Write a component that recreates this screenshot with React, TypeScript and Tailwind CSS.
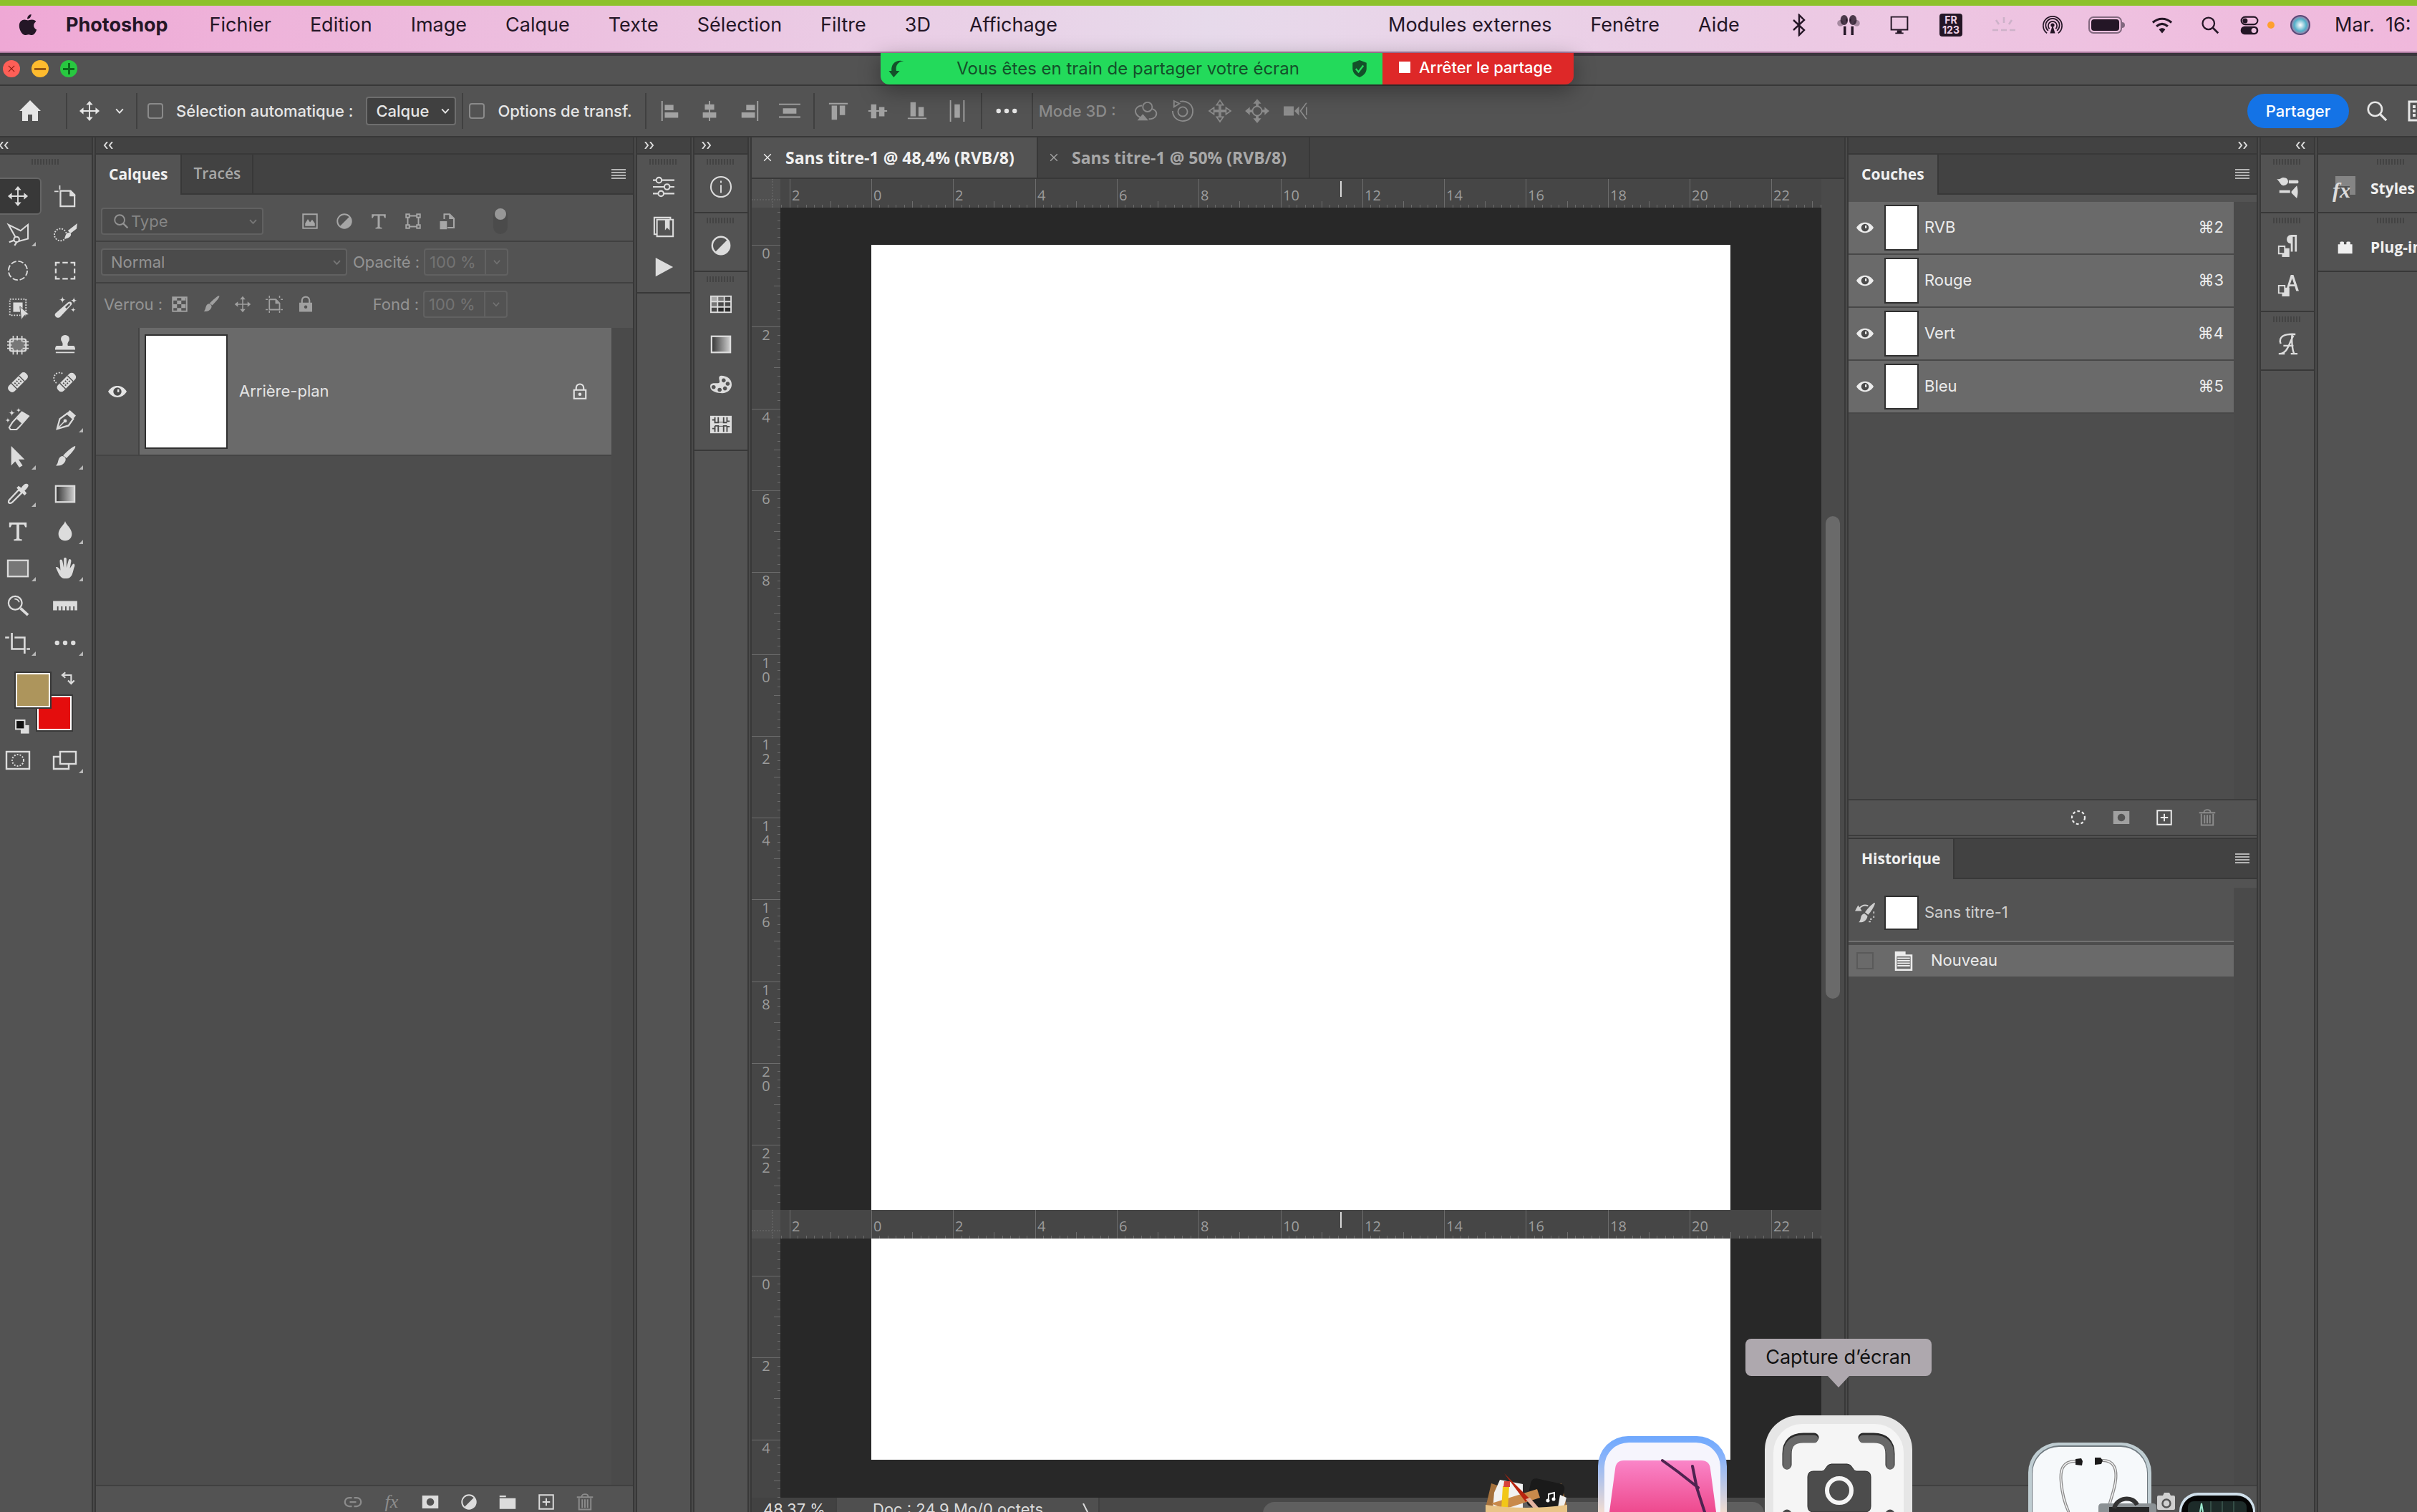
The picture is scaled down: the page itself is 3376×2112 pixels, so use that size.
import type { ReactNode } from 'react'

type IconProps = {
  name: string
  className?: string
}

const star = (x: number, y: number, r: number) =>
  `M${x} ${y - r}Q${x} ${y} ${x + r} ${y}Q${x} ${y} ${x} ${y + r}Q${x} ${y} ${x - r} ${y}Q${x} ${y} ${x} ${y - r}Z`

// All drawings share a 32 x 32 grid
const icons: Record<string, ReactNode> = {
  move: (
    <>
      <path d="M16 4v24M4 16h24" stroke="currentColor" strokeWidth="2" />
      <path d="M16 1l5 6H11zM16 31l5-6H11zM1 16l6-5v10zM31 16l-6-5v10z" fill="currentColor" />
    </>
  ),
  artboard: (
    <>
      <path d="M9 8h15l6 6v17H9zM24 8v7h6" fill="none" stroke="currentColor" strokeWidth="2.4" />
      <path d="M0 9h6M8 0v6" stroke="currentColor" strokeWidth="1.8" />
      <path d="M23 8h2l6 6v2h-8z" fill="currentColor" />
    </>
  ),
  lasso: (
    <>
      <path d="M2 3l18 9 11-9v21l-15 4L2 3z" fill="none" stroke="currentColor" strokeWidth="2.2" />
      <ellipse cx="14" cy="25" rx="4" ry="4" fill="#535353" stroke="currentColor" strokeWidth="2.2" />
      <path d="M3 29l8-3M11 34l4-6" stroke="currentColor" strokeWidth="2.4" />
    </>
  ),
  quickselect: (
    <>
      <circle cx="9" cy="18" r="9" fill="none" stroke="currentColor" strokeWidth="2" strokeDasharray="2 2" />
      <path d="M34 1l-1 8-9 7-4-4z" fill="currentColor" />
      <path d="M14 24c3 0 1-10 9-9 4 2 1 9-9 9z" fill="currentColor" />
    </>
  ),
  ellipse: <circle cx="16" cy="16" r="14" fill="none" stroke="currentColor" strokeWidth="2" strokeDasharray="8 3" />,
  marquee: (
    <path
      d="M2 9V4h6M12 4h8M24 4h6v5M30 13v7M30 24v4h-6M20 28h-8M8 28H2v-4M2 20v-7"
      fill="none"
      stroke="currentColor"
      strokeWidth="2.4"
    />
  ),
  objectselect: (
    <>
      <rect x="4" y="3" width="24" height="24" fill="none" stroke="currentColor" strokeWidth="2" strokeDasharray="2 2" />
      <path d="M9 8h14v14H9z" fill="currentColor" />
      <path d="M19 14l14 12-7 1-5 7z" fill="currentColor" stroke="#535353" strokeWidth="1" />
    </>
  ),
  wand: (
    <>
      <path d="M3 30c-3-2-3-5 0-7L20 8c4-3 8 1 5 4L9 29c-2 2-4 2-6 1z" fill="currentColor" />
      <path d="M16 15l5-5c2-1 3 0 2 2l-5 5z" fill="#535353" />
      <path d={star(12, 4, 5) + star(29, 5, 5) + star(28, 19, 4)} fill="currentColor" />
    </>
  ),
  frame: (
    <>
      <rect x="4" y="7" width="24" height="18" rx="3" fill="#777" stroke="currentColor" strokeWidth="2.2" />
      <path
        d="M9 2v9M15 2v7M22 2v9M9 22v8M15 23v7M22 22v8M0 11h9M0 16h7M0 21h9M23 11h9M25 16h7M23 21h9"
        stroke="currentColor"
        strokeWidth="1.8"
      />
    </>
  ),
  stamp: (
    <path
      d="M16 1c5 0 7 4 6 8-2 3-3 5-2 8h8c2 0 3 2 3 6H1c0-4 1-6 3-6h8c1-3 0-5-2-8-1-4 1-8 6-8zM2 26h28v2H2z"
      fill="currentColor"
    />
  ),
  heal: (
    <g transform="rotate(-45 16 16)">
      <rect x="-2" y="10" width="36" height="12" rx="5" fill="currentColor" />
      <path d="M8 10v12M24 10v12" stroke="#535353" strokeWidth="1.6" />
      <path d="M11 14h2M15 14h2M19 14h2M11 18h2M15 18h2M19 18h2" stroke="#535353" strokeWidth="2.2" />
    </g>
  ),
  spotheal: (
    <>
      <path d="M12 3a8 8 0 0 0-9 14" fill="none" stroke="currentColor" strokeWidth="2" strokeDasharray="2 2" />
      <g transform="rotate(-45 18 16)">
        <rect x="1" y="10" width="34" height="12" rx="5" fill="currentColor" />
        <path d="M10 10v12M26 10v12" stroke="#535353" strokeWidth="1.6" />
        <path d="M13 14h2M17 14h2M21 14h2M13 18h2M17 18h2M21 18h2" stroke="#535353" strokeWidth="2.2" />
      </g>
    </>
  ),
  eraser: (
    <>
      <path d="M8 20L22 5l10 6-14 16-4 4H5l-2-3z" fill="none" stroke="currentColor" strokeWidth="2.2" />
      <path d="M14 15l8-10 10 6-10 11z" fill="currentColor" />
      <path d={star(7, 6, 5) + star(17, 2, 4) + star(1, 17, 4)} fill="currentColor" />
    </>
  ),
  pen: (
    <>
      <path d="M4 30l4-15 11-8 9 8-7 10z" fill="none" stroke="currentColor" strokeWidth="2.4" />
      <path d="M18 7l5-5 9 8-4 5z" fill="currentColor" />
      <path d="M4 30l11-11" stroke="currentColor" strokeWidth="1.6" />
      <circle cx="16" cy="18" r="2.6" fill="currentColor" />
    </>
  ),
  arrow: <path d="M6 0v29l6-6 6 9 5-3-6-9h9z" fill="currentColor" />,
  brush: (
    <>
      <path d="M31 0c1 2-2 7-13 18l-5-4C23 4 29 0 31 0z" fill="currentColor" />
      <path d="M12 15c4 1 6 4 4 8-3 6-9 7-14 6 5-2 2-13 10-14z" fill="currentColor" />
    </>
  ),
  dropper: (
    <>
      <path d="M19 11l3 3L8 28c-3 3-8 2-5-3L17 10z" fill="none" stroke="currentColor" strokeWidth="2.4" />
      <path d="M14 7l3-3 4 3c3-5 6-7 9-6s2 5-4 10l3 4-3 3z" fill="currentColor" />
    </>
  ),
  gradient: (
    <>
      <defs>
        <linearGradient id="tool-gradient">
          <stop offset="0" stopColor="#333" />
          <stop offset="1" stopColor="#d0d0d0" />
        </linearGradient>
      </defs>
      <rect x="2" y="4" width="28" height="24" fill="url(#tool-gradient)" stroke="currentColor" strokeWidth="2.4" />
    </>
  ),
  type: (
    <path d="M3 3h26v7h-2l-2-4h-7v20c0 1 1 2 4 2v2H10v-2c3 0 4-1 4-2V6H7l-2 4H3z" fill="currentColor" />
  ),
  drop: <path d="M16 1c1 5 10 11 10 19 0 6-4 10-10 10S6 26 6 20C6 12 15 6 16 1z" fill="currentColor" />,
  rect: <rect x="1" y="4" width="30" height="24" fill="#777" stroke="currentColor" strokeWidth="2.4" />,
  hand: (
    <path
      d="M2 14c2-1 5 1 7 5L8 5c0-3 3-3 4 0l2 10V2c0-3 4-3 4 0v13l3-11c1-3 4-2 4 1l-2 11 4-6c2-2 4 0 3 3-3 7-2 18-13 18-9 0-10-6-15-17z"
      fill="currentColor"
    />
  ),
  zoom: (
    <>
      <circle cx="12" cy="12" r="10" fill="none" stroke="currentColor" strokeWidth="2.4" />
      <path d="M11 6c4 0 6 2 7 5" fill="none" stroke="currentColor" strokeWidth="1.8" />
      <path d="M20 20l11 10" stroke="currentColor" strokeWidth="4" />
    </>
  ),
  ruler: (
    <path d="M-2 9h36v14h-4v-6h-2v6h-4v-6h-2v6h-4v-6h-2v6h-4v-6h-2v6H6v-6H4v6h-6z" fill="currentColor" />
  ),
  crop: (
    <path d="M-3 8h6M7 1v24h18M11 8h15v24M29 25h5" fill="none" stroke="currentColor" strokeWidth="2.8" />
  ),
  dots: (
    <g fill="currentColor">
      <circle cx="4" cy="16" r="3.4" />
      <circle cx="16" cy="16" r="3.4" />
      <circle cx="28" cy="16" r="3.4" />
    </g>
  ),
  quickmask: (
    <>
      <rect x="0" y="4" width="32" height="24" fill="none" stroke="currentColor" strokeWidth="2.4" />
      <circle cx="16" cy="16" r="8" fill="none" stroke="currentColor" strokeWidth="2" strokeDasharray="2 2" />
    </>
  ),
  screen: (
    <g fill="none" stroke="currentColor" strokeWidth="2.4">
      <path d="M9 11H0v17h21v-6" />
      <rect x="9" y="4" width="22" height="17" />
    </g>
  ),
  swap: <path d="M5 8h18v16M10 2L3 8l7 6M16 20l7 7 7-7" fill="none" stroke="currentColor" strokeWidth="3.4" />,
  defaults: (
    <>
      <rect x="13" y="13" width="17" height="17" fill="#dcdcdc" />
      <rect x="3" y="3" width="18" height="18" fill="#111" stroke="#dcdcdc" strokeWidth="3" />
    </>
  ),
  home: <path d="M16 1l15 15h-4v14h-8v-9h-6v9H5V16H1z" fill="currentColor" />,
  chevron: <path d="M5 10l11 12 11-12" fill="none" stroke="currentColor" strokeWidth="4.4" />,
  close: <path d="M5 5l22 22M27 5L5 27" stroke="currentColor" strokeWidth="3" />,
  alignleft: <path d="M3 1h2v30H3zM8 7h13v8H8zM8 18h20v8H8z" fill="currentColor" />,
  aligncenter: <path d="M15 1h2v30h-2zM9 6h14v8H9zM6 18h20v8H6z" fill="currentColor" />,
  alignright: <path d="M27 1h2v30h-2zM11 7h13v8H11zM4 18h20v8H4z" fill="currentColor" />,
  distrh: <path d="M0 5h32v2H0zM6 12h20v8H6zM0 24h32v2H0z" fill="currentColor" />,
  aligntop: <path d="M2 4h28v2H2zM6 8h8v21H6zM18 8h8v14h-8z" fill="currentColor" />,
  alignmiddle: <path d="M2 15h28v2H2zM6 6h8v21H6zM18 10h8v14h-8z" fill="currentColor" />,
  alignbottom: <path d="M2 26h28v2H2zM6 3h8v21H6zM18 10h8v14h-8z" fill="currentColor" />,
  distrv: <path d="M5 0h2v32H5zM12 6h8v20h-8zM25 0h2v32h-2z" fill="currentColor" />,
  orbit: (
    <g fill="none" stroke="currentColor" strokeWidth="2">
      <circle cx="19" cy="10" r="7" />
      <path d="M11 8C4 8-1 14 2 20c2 4 6 6 10 7M26 13c6 2 8 6 5 11-2 3-6 4-10 4" />
      <path d="M6 29h12l-6-7z" fill="currentColor" />
    </g>
  ),
  roll: (
    <g fill="none" stroke="currentColor" strokeWidth="2">
      <circle cx="16" cy="17" r="7" />
      <path d="M12 2c10-2 19 4 19 14s-7 15-15 15S1 25 1 16M3 10V1l8 4z" />
    </g>
  ),
  pan: (
    <path
      d="M16 0l5 7h-4v8h8v-4l7 5-7 5v-4h-8v8h4l-5 7-5-7h4v-8H7v4l-7-5 7-5v4h8V7h-4z"
      fill="none"
      stroke="currentColor"
      strokeWidth="1.8"
    />
  ),
  slide: (
    <>
      <circle cx="16" cy="16" r="7" fill="none" stroke="currentColor" strokeWidth="2" />
      <path d="M16-2l6 7h-4v4h-4V5h-4zM16 34l6-7h-4v-4h-4v4h-4zM-2 16l7-6v4h4v4H5v4zM34 16l-7-6v4h-4v4h4v4z" fill="currentColor" />
    </>
  ),
  camera3d: (
    <>
      <path d="M0 9h15v14H0zM16 16l7-7v14z" fill="currentColor" />
      <path d="M34 4l-9 12 9 12M34 10v12" fill="none" stroke="currentColor" strokeWidth="1.8" />
    </>
  ),
  image: (
    <>
      <rect x="3" y="3" width="26" height="26" fill="none" stroke="currentColor" strokeWidth="2.6" />
      <path d="M7 25v-5l5-8 4 6 4-5 5 7v5z" fill="currentColor" />
    </>
  ),
  adjust: (
    <>
      <circle cx="16" cy="16" r="13" fill="none" stroke="currentColor" strokeWidth="2.6" />
      <path d="M26 7A13.5 13.5 0 0 1 7 26z" fill="currentColor" />
    </>
  ),
  shape: (
    <g fill="none" stroke="currentColor" strokeWidth="2.6">
      <path d="M6 8v16M26 8v16M9 6h14M9 26h14" />
      <path d="M3 3h6v6H3zM23 3h6v6h-6zM3 23h6v6H3zM23 23h6v6h-6z" />
    </g>
  ),
  smart: (
    <>
      <path d="M10 12V3h10l8 8v17H16" fill="none" stroke="currentColor" strokeWidth="2.8" />
      <path d="M19 3v9h9M2 16h13v15H2z" fill="currentColor" />
    </>
  ),
  checker: (
    <>
      <rect x="3" y="3" width="26" height="26" fill="none" stroke="currentColor" strokeWidth="2.6" />
      <path d="M3 3h8v6H3zM19 3h8v6h-8zM11 9h8v7h-8zM3 16h8v7H3zM19 16h8v7h-8zM11 23h8v6h-8z" fill="currentColor" />
    </>
  ),
  artlock: (
    <>
      <path d="M7 7h12l7 7v12H7z" fill="none" stroke="currentColor" strokeWidth="2.4" />
      <path d="M18 7v8h8zM0 6h4v2H0zM6 0h2v4H6zM28 6h4v2h-4zM25 0h2v4h-2zM0 25h4v2H0zM6 28h2v4H6zM28 25h4v2h-4zM25 28h2v4h-2z" fill="currentColor" />
    </>
  ),
  lock: (
    <>
      <path d="M9 14V9a7 7 0 0 1 14 0v5" fill="none" stroke="currentColor" strokeWidth="3" />
      <path d="M4 13h24v17H4zM16 18a3 3 0 1 0 .1 0z" fill="currentColor" fillRule="evenodd" />
    </>
  ),
  lockopen: (
    <>
      <path d="M9 13V9a7 7 0 0 1 14 0v4M5 13h22v16H5z" fill="none" stroke="currentColor" strokeWidth="2.8" />
      <circle cx="16" cy="21" r="3" fill="currentColor" />
    </>
  ),
  eye: (
    <>
      <path d="M0 16C8 3 24 3 32 16 24 29 8 29 0 16z" fill="currentColor" />
      <circle cx="16" cy="16" r="7" fill="#4a4a4a" />
      <path d="M16 12h3v5h-3z" fill="currentColor" />
    </>
  ),
  sliders: (
    <g fill="none" stroke="currentColor" strokeWidth="2.2">
      <path d="M0 6h5M12 6h20M0 16h17M24 16h8M0 26h8M15 26h17" />
      <circle cx="9" cy="6" r="4" />
      <circle cx="21" cy="16" r="4" />
      <circle cx="12" cy="26" r="4" />
    </g>
  ),
  book: (
    <>
      <path d="M5 27H2V2h24v4M6 5h24v25H6z" fill="none" stroke="currentColor" strokeWidth="2.2" />
      <path d="M18 5h7v16l-4-4-3 4z" fill="currentColor" />
    </>
  ),
  play: <path d="M4 2l26 14L4 30z" fill="currentColor" />,
  info: (
    <>
      <circle cx="16" cy="16" r="15" fill="none" stroke="currentColor" strokeWidth="2.2" />
      <path d="M15 13h2v12h-2zM15 7h2v3h-2z" fill="currentColor" />
    </>
  ),
  swatches: (
    <>
      <path d="M0 3h32v26H0z" fill="currentColor" />
      <path d="M2 5h8v6H2z" fill="#aaa" />
      <path d="M12 5h8v6h-8zM2 13h8v6H2z" fill="#777" />
      <path d="M22 5h8v6h-8zM12 13h8v6h-8zM22 13h8v6h-8zM2 21h8v6H2z" fill="#484848" />
      <path d="M12 21h8v6h-8zM22 21h8v6h-8z" fill="#2a2a2a" />
    </>
  ),
  palette: (
    <path
      d="M16 3c9 0 16 5 16 13s-7 13-14 13S0 27 0 19c0-4 3-5 6-5s8 1 8-2-3-8 2-9zM5 17a3 3 0 1 0 .1 0zM14 21a3 3 0 1 0 .1 0zM22 19a3 3 0 1 0 .1 0zM26 12a3 3 0 1 0 .1 0zM20 7a3 3 0 1 0 .1 0z"
      fill="currentColor"
      fillRule="evenodd"
    />
  ),
  pattern: (
    <>
      <path d="M0 3h32v26H0z" fill="currentColor" />
      <path d="M3 9h4M7 5v8h4M3 22h4M7 18v9M12 5v8M12 18v9M20 5v8M20 18v9M25 5v6h4M25 27v-8h4M7 13h18M7 18h18" fill="none" stroke="#484848" strokeWidth="2" />
      <path d="M13 13h6v5h-6z" fill="currentColor" />
    </>
  ),
  brushes: (
    <>
      <path d="M0 4c5 2 6-2 10-2 5 0 7 3 7 6s-3 6-7 6S5 9 0 4zM18 6h13c2 0 2 5 0 5H18zM4 21h16v4H4zM22 23l8-9c2 6 2 13 0 19l-8-8z" fill="currentColor" />
    </>
  ),
  parastyle: (
    <>
      <path d="M30 0v25h-3V3h-3v22h-3V13c-8 0-8-13 1-13z" fill="currentColor" />
      <path d="M8 20h11v13H8z" fill="currentColor" />
      <path d="M3 17h9v11H3z" fill="#535353" stroke="currentColor" strokeWidth="2" />
    </>
  ),
  charstyle: (
    <>
      <path d="M21 0h4l8 24h-4l-2-7h-8l-2 6h-3zM23 5l-3 9h6z" fill="currentColor" fillRule="evenodd" />
      <path d="M8 19h11v13H8z" fill="currentColor" />
      <path d="M3 16h9v11H3z" fill="#535353" stroke="currentColor" strokeWidth="2" />
    </>
  ),
  glyphs: (
    <path
      d="M6 15C2 4 12 0 28 1M23 2c-1 6 0 22 3 28M25 3C19 12 17 30 4 30M10 18h15M3 30h9M21 30h10"
      fill="none"
      stroke="currentColor"
      strokeWidth="2.6"
    />
  ),
  plugin: <path d="M1 9h4V5c0-2 8-2 8 0v4h5V5c0-2 8-2 8 0v4h4v19H1z" fill="currentColor" />,
  selection: (
    <circle cx="16" cy="16" r="12" fill="none" stroke="currentColor" strokeWidth="3" strokeDasharray="5 4" />
  ),
  mask: <path d="M1 4h30v24H1zM16 9a7 7 0 1 0 .1 0z" fill="currentColor" fillRule="evenodd" />,
  plus: (
    <path d="M3 3h26v26H3zM9 16h14M16 9v14" fill="none" stroke="currentColor" strokeWidth="2.6" />
  ),
  trash: (
    <path
      d="M1 7h30M10 6c0-6 12-6 12 0M5 9v21h22V9M11 11v16M16 11v16M21 11v16"
      fill="none"
      stroke="currentColor"
      strokeWidth="2.6"
    />
  ),
  folder: <path d="M1 4h12v3H1zM1 9h30v20H1z" fill="currentColor" />,
  link: (
    <path d="M14 8H9a8 8 0 0 0 0 16h5M18 8h5a8 8 0 0 1 0 16h-5M10 16h12" fill="none" stroke="currentColor" strokeWidth="3" />
  ),
  history: (
    <>
      <path d="M32 0c0 4-6 14-11 19l-5-4C22 7 29 0 32 0z" fill="currentColor" />
      <path d="M15 17l5 4c-1 8-8 11-14 10 5-4 1-12 9-14zM0 13L5 4l6 9z" fill="currentColor" />
      <path d="M7 9c4-5 9-6 14-4" fill="none" stroke="currentColor" strokeWidth="2" />
      <path d="M30 14v3M30 21v3M27 26h-3M22 30h3" stroke="currentColor" strokeWidth="2" />
    </>
  ),
  document: (
    <>
      <path d="M2 1h17v5h11v26H2z" fill="currentColor" />
      <path d="M5 9h22v20H5z" fill="#6a6a6a" />
      <path d="M6 12h20M6 16h20M6 20h20M6 24h20" stroke="currentColor" strokeWidth="2.2" />
    </>
  ),
  search: (
    <>
      <circle cx="13" cy="13" r="11" fill="none" stroke="currentColor" strokeWidth="3" />
      <path d="M21 21l10 10" stroke="currentColor" strokeWidth="3.6" />
    </>
  ),
  workspace: (
    <>
      <path d="M3 3h28v26H3z" fill="none" stroke="currentColor" strokeWidth="3" />
      <path d="M8 8h4v4H8zM8 14h4v4H8zM8 20h4v4H8z" fill="currentColor" />
    </>
  ),
  apple: (
    <path
      d="M21 0c0 4-3 7-6 7 0-4 3-7 6-7zM22 8c3 0 5 1 6 3-5 3-4 10 1 12-2 5-4 8-7 8-2 0-3-1-5-1s-4 1-5 1C8 31 3 24 3 17c0-6 4-9 8-9 2 0 4 1 5 1s3-1 6-1z"
      fill="currentColor"
    />
  ),
  bluetooth: <path d="M8 9l15 14-7 7V2l7 7L8 23" fill="none" stroke="currentColor" strokeWidth="2.4" />,
  airpods: (
    <g fill="currentColor">
      <circle cx="3" cy="13" r="5" opacity=".35" />
      <circle cx="29" cy="13" r="5" opacity=".35" />
      <ellipse cx="9" cy="8" rx="6" ry="8" opacity=".8" />
      <ellipse cx="23" cy="8" rx="6" ry="8" opacity=".8" />
      <path d="M8 18h4v14H8zM20 18h4v14h-4z" />
      <path d="M12 4l2 4-2 5zM20 4l-2 4 2 5z" />
    </g>
  ),
  display: (
    <>
      <path d="M2 2h28v22H2z" fill="none" stroke="currentColor" strokeWidth="2.4" />
      <path d="M12 25h8v4h3v2H9v-2h3z" fill="currentColor" />
    </>
  ),
  keylight: (
    <g stroke="currentColor" strokeWidth="2.6">
      <path d="M16 5v8M5 9l4 6M27 9l-4 6M0 23h8M12 23h8M24 23h8" />
    </g>
  ),
  airdrop: (
    <g fill="none" stroke="currentColor" strokeWidth="2">
      <path d="M7 29a15 15 0 1 1 18 0M9 25a11 11 0 1 1 14 0M11 22a7 7 0 1 1 10 0" />
      <path d="M16 16l4 13h-8z" fill="currentColor" stroke="none" />
      <circle cx="16" cy="16" r="3" fill="currentColor" stroke="none" />
    </g>
  ),
  wifi: (
    <g fill="none" stroke="currentColor" strokeWidth="3.6">
      <path d="M1 12c9-8 21-8 30 0M7 18c6-5 12-5 18 0" />
      <path d="M16 29l-5-6c3-3 7-3 10 0z" fill="currentColor" stroke="none" />
    </g>
  ),
  control: (
    <>
      <rect x="3" y="3" width="26" height="12" rx="6" fill="none" stroke="currentColor" strokeWidth="2.4" />
      <circle cx="9" cy="9" r="4" fill="currentColor" />
      <rect x="2" y="18" width="28" height="13" rx="6" fill="currentColor" />
      <circle cx="23" cy="24.500" r="4" fill="#ecc1df" />
    </>
  ),
  sharearrow: <path d="M30 2C18 2 14 12 16 20h6L11 32 2 20h5C6 8 14-2 30 2z" fill="currentColor" />,
  shield: (
    <>
      <path d="M16 0l13 5v10c0 9-6 14-13 17C9 29 3 24 3 15V5z" fill="currentColor" />
      <path d="M9 16l5 6 9-12" fill="none" stroke="#23da5b" strokeWidth="3" />
    </>
  ),
}

function Icon({ name, className = 'size-8' }: IconProps) {
  return (
    <svg viewBox="0 0 32 32" className={`shrink-0 overflow-visible ${className}`} aria-hidden="true">
      {icons[name]}
    </svg>
  )
}

type IconButtonProps = {
  name: string
  label: string
  box?: string
  className?: string
}

function IconButton({ name, label, box = '', className }: IconButtonProps) {
  return (
    <button aria-label={label} className={`flex shrink-0 items-center justify-center ${box}`}>
      <Icon name={name} className={className} />
    </button>
  )
}

const leftMenus = ['Fichier', 'Edition', 'Image', 'Calque', 'Texte', 'Sélection', 'Filtre', '3D', 'Affichage']
const rightMenus = ['Modules externes', 'Fenêtre', 'Aide']

function MenuBar() {
  return (
    <header className="flex h-[66px] shrink-0 items-center justify-between border-b-2 border-[#a8789c] bg-linear-to-r from-[#efa8d5] via-[#e7daeb] to-[#f0b8dc] pb-[10px] text-[27px] leading-8 whitespace-nowrap text-[#241626]">
      <nav className="flex items-center gap-[54px] pl-6">
        <Icon name="apple" className="h-8 w-[30px]" />
        <button className="mr-1 -ml-4 font-bold">Photoshop</button>
        {leftMenus.map((item) => (
          <button key={item}>{item}</button>
        ))}
      </nav>
      <div className="flex w-[1437px] items-center overflow-hidden">
        <nav className="flex w-[544px] shrink-0 gap-[54px]">
          {rightMenus.map((item) => (
            <button key={item}>{item}</button>
          ))}
        </nav>
        <IconButton name="bluetooth" label="Bluetooth" box="w-[60px]" className="size-8" />
        <IconButton name="airpods" label="AirPods" box="w-[78px]" className="h-7 w-9" />
        <IconButton name="display" label="Recopie de l’écran" box="w-[64px]" className="h-[26px] w-[30px]" />
        <span className="flex w-[80px] justify-center">
          <span className="flex size-8 flex-col items-center justify-center rounded bg-[#241626] text-[14px] leading-[14px] font-bold text-[#efd0e5]">
            <span>FR</span>
            <span>123</span>
          </span>
        </span>
        <IconButton name="keylight" label="Rétroéclairage" box="w-[68px] text-[#cdb2c9]" />
        <IconButton name="airdrop" label="AirDrop" box="w-[68px]" className="size-7" />
        <span className="flex w-[82px] items-center justify-center">
          <span className="flex h-6 w-[47px] rounded-[7px] border-2 border-[#82687f] p-[2px]">
            <span className="flex-1 rounded bg-[#241626]" />
          </span>
          <span className="h-2 w-1 rounded-r bg-[#82687f]" />
        </span>
        <IconButton name="wifi" label="Wi-Fi" box="w-[74px]" className="h-7 w-8" />
        <IconButton name="search" label="Rechercher" box="w-[60px]" className="size-6" />
        <IconButton name="control" label="Centre de contrôle" box="w-[50px]" className="size-7" />
        <span className="size-[10px] rounded-full bg-[#ff9f2e]" />
        <span className="ml-[22px] size-7 shrink-0 rounded-full border-2 border-[#5b4a78] bg-radial from-white via-[#4fb0c9] to-[#b23a86]" />
        <span className="ml-[34px]">Mar.&nbsp; 16:</span>
      </div>
    </header>
  )
}

function TitleBar() {
  return (
    <div className="flex h-[46px] shrink-0 items-center gap-4 border-t-4 border-b-2 border-t-[#3a353c] border-b-[#383838] bg-[#535353] pb-1 pl-1">
      <button aria-label="Fermer" className="flex size-6 items-center justify-center rounded-full bg-[#fe5f57] text-[#8c1a10]">
        <Icon name="close" className="size-3" />
      </button>
      <button aria-label="Réduire" className="flex size-6 items-center justify-center rounded-full bg-[#febb2e]">
        <span className="h-[3px] w-4 bg-[#985712]" />
      </button>
      <button aria-label="Agrandir" className="relative flex size-6 items-center justify-center rounded-full bg-[#28c840]">
        <span className="h-[3px] w-4 bg-[#0b6a1b]" />
        <span className="absolute h-4 w-[3px] bg-[#0b6a1b]" />
      </button>
    </div>
  )
}

function ShareBanner() {
  return (
    <div className="absolute top-[74px] left-[1230px] flex h-11 w-[968px] overflow-hidden rounded-b-xl shadow-[0_8px_30px_rgba(0,0,0,0.35)]">
      <div className="flex flex-1 items-center justify-between bg-[#23da5b] pr-5 pl-[10px] text-[24px] text-[#14502a]">
        <Icon name="sharearrow" className="size-6" />
        <span>Vous êtes en train de partager votre écran</span>
        <Icon name="shield" className="size-6" />
      </div>
      <button className="flex w-[267px] items-center gap-3 bg-[#de2828] pb-1 pl-[23px] text-[22px] font-medium whitespace-nowrap text-white">
        <span className="size-4 bg-white" />
        Arrêter le partage
      </button>
    </div>
  )
}

function Separator() {
  return <span className="h-[50px] w-[2px] shrink-0 bg-[#404040]" />
}

function OptionsBar() {
  return (
    <div className="flex h-[72px] shrink-0 items-center border-b-2 border-[#383838] bg-[#535353] text-[22px] font-medium whitespace-nowrap text-[#e6e6e6]">
      <IconButton name="home" label="Accueil" box="w-[92px] pr-2" className="size-8" />
      <Separator />
      <IconButton name="move" label="Outil Déplacement" box="w-[62px]" className="size-[30px]" />
      <IconButton name="chevron" label="Préréglages" box="w-[34px] pr-3" className="size-[14px]" />
      <Separator />
      <label className="flex items-center gap-[18px] pl-[14px]">
        <input type="checkbox" className="size-[22px] appearance-none rounded border-2 border-[#8a8a8a]" />
        Sélection automatique :
      </label>
      <span className="relative ml-[18px] flex items-center">
        <select aria-label="Sélection automatique" className="h-[40px] w-[126px] appearance-none rounded border-2 border-[#6e6e6e] bg-[#404040] pl-3">
          <option>Calque</option>
        </select>
        <Icon name="chevron" className="pointer-events-none absolute right-2 size-[14px]" />
      </span>
      <span className="w-2" />
      <Separator />
      <label className="flex items-center gap-[18px] pr-[18px] pl-2">
        <input type="checkbox" className="size-[22px] appearance-none rounded border-2 border-[#8a8a8a]" />
        Options de transf.
      </label>
      <Separator />
      <div className="flex w-[233px] items-center justify-between px-[18px] text-[#a2a2a2]">
        <IconButton name="alignleft" label="Aligner à gauche" className="size-[30px]" />
        <IconButton name="aligncenter" label="Aligner au centre" className="size-[30px]" />
        <IconButton name="alignright" label="Aligner à droite" className="size-[30px]" />
        <IconButton name="distrh" label="Répartir verticalement" className="size-[30px]" />
      </div>
      <Separator />
      <div className="flex w-[232px] items-center justify-between px-[18px] text-[#a2a2a2]">
        <IconButton name="aligntop" label="Aligner en haut" className="size-[30px]" />
        <IconButton name="alignmiddle" label="Aligner au milieu" className="size-[30px]" />
        <IconButton name="alignbottom" label="Aligner en bas" className="size-[30px]" />
        <IconButton name="distrv" label="Répartir horizontalement" className="size-[30px]" />
      </div>
      <Separator />
      <IconButton name="dots" label="Plus d’options" box="w-[69px]" className="size-[30px]" />
      <Separator />
      <div className="flex items-center gap-[22px] pl-2 text-[#8c8c8c]">
        <span className="mr-1">Mode 3D :</span>
        <IconButton name="orbit" label="Orbite 3D" className="size-[30px]" />
        <IconButton name="roll" label="Roulis 3D" className="size-[30px]" />
        <IconButton name="pan" label="Panoramique 3D" className="size-[30px]" />
        <IconButton name="slide" label="Glissement 3D" className="size-[30px]" />
        <IconButton name="camera3d" label="Caméra 3D" className="size-[30px]" />
      </div>
      <div className="ml-auto flex items-center">
        <button className="h-12 w-[142px] rounded-full bg-[#1473e6] text-white">Partager</button>
        <IconButton name="search" label="Rechercher" box="ml-[25px]" className="size-7" />
        <IconButton name="workspace" label="Espace de travail" box="-mr-[18px] ml-7" className="size-8" />
      </div>
    </div>
  )
}

function Grip() {
  return (
    <span className="mx-auto block h-2 w-10 shrink-0 bg-[repeating-linear-gradient(90deg,#434343_0_2px,transparent_2px_4px)]" />
  )
}

function Divider() {
  return <div className="w-[6px] shrink-0 border-x-2 border-[#383838] bg-[#4a4a4a]" />
}

function ColumnHead({ children }: { children?: ReactNode }) {
  return (
    <div className="flex h-6 shrink-0 items-center border-b-2 border-[#383838] bg-[#424242] text-[#dcdcdc]">
      {children}
    </div>
  )
}

function DoubleChevron({ back = false, className = '' }: { back?: boolean; className?: string }) {
  return (
    <button aria-label={back ? 'Développer' : 'Réduire'} className={className}>
      <svg viewBox="0 0 14 10" className={back ? 'h-[10px] w-[14px]' : 'h-[10px] w-[14px] rotate-180'}>
        <path d="M6 0L2 5l4 5M13 0L9 5l4 5" fill="none" stroke="currentColor" strokeWidth="2" />
      </svg>
    </button>
  )
}

const tools = [
  { name: 'move', label: 'Déplacement', active: true },
  { name: 'artboard', label: 'Plan de travail' },
  { name: 'lasso', label: 'Lasso', more: true },
  { name: 'quickselect', label: 'Sélection rapide' },
  { name: 'ellipse', label: 'Ellipse de sélection' },
  { name: 'marquee', label: 'Rectangle de sélection' },
  { name: 'objectselect', label: 'Sélection d’objet' },
  { name: 'wand', label: 'Baguette magique' },
  { name: 'frame', label: 'Pièce' },
  { name: 'stamp', label: 'Tampon' },
  { name: 'heal', label: 'Correcteur' },
  { name: 'spotheal', label: 'Correcteur localisé' },
  { name: 'eraser', label: 'Gomme magique' },
  { name: 'pen', label: 'Plume', more: true },
  { name: 'arrow', label: 'Sélection de tracé', more: true },
  { name: 'brush', label: 'Pinceau', more: true },
  { name: 'dropper', label: 'Pipette', more: true },
  { name: 'gradient', label: 'Dégradé' },
  { name: 'type', label: 'Texte' },
  { name: 'drop', label: 'Goutte d’eau', more: true },
  { name: 'rect', label: 'Rectangle', more: true },
  { name: 'hand', label: 'Main', more: true },
  { name: 'zoom', label: 'Zoom' },
  { name: 'ruler', label: 'Règle' },
  { name: 'crop', label: 'Recadrage', more: true },
  { name: 'dots', label: 'Modifier la barre d’outils', more: true },
]

function MoreMark() {
  return (
    <svg viewBox="0 0 6 6" className="absolute right-2 bottom-2 size-[6px] text-[#b8b8b8]" aria-hidden="true">
      <path d="M6 0v6H0z" fill="currentColor" />
    </svg>
  )
}

function Toolbar() {
  return (
    <aside className="flex w-32 shrink-0 flex-col overflow-hidden bg-[#535353] text-[#dcdcdc]">
      <ColumnHead>
        <DoubleChevron back className="-ml-[2px]" />
      </ColumnHead>
      <div className="pt-[6px]">
        <Grip />
      </div>
      <div className="-ml-2 grid w-[132px] grid-cols-2 pt-[18px]">
        {tools.map((tool) => (
          <button
            key={tool.name}
            aria-label={tool.label}
            className={
              tool.active
                ? 'relative flex h-[52px] items-center justify-center rounded-md border-2 border-[#666] bg-[#383838]'
                : 'relative flex h-[52px] items-center justify-center'
            }
          >
            <Icon name={tool.name} className="size-[30px]" />
            {tool.more && <MoreMark />}
          </button>
        ))}
      </div>
      <div className="relative mt-[14px] h-[86px]">
        <button aria-label="Couleur d’arrière-plan" className="absolute top-8 left-[50px] size-[52px] border-2 border-[#383838] bg-[#e40d0d] outline-2 -outline-offset-4 outline-white" />
        <button aria-label="Couleur de premier plan" className="absolute top-0 left-5 size-[52px] border-2 border-[#383838] bg-[#ad955c] outline-2 -outline-offset-4 outline-white" />
        <IconButton name="swap" label="Permuter les couleurs" box="absolute top-0 left-[85px]" className="size-5" />
        <IconButton name="defaults" label="Couleurs par défaut" box="absolute top-[66px] left-5" className="size-[22px]" />
      </div>
      <div className="-ml-2 grid w-[132px] grid-cols-2 pt-3">
        <IconButton name="quickmask" label="Mode masque" box="h-[52px]" />
        <button aria-label="Mode d’affichage" className="relative flex h-[52px] items-center justify-center">
          <Icon name="screen" />
          <MoreMark />
        </button>
      </div>
    </aside>
  )
}

function PanelTabs({ tabs }: { tabs: string[] }) {
  return (
    <div className="flex h-14 shrink-0 bg-[#424242] font-['Open_Sans',sans-serif] text-[21px] font-bold">
      {tabs.map((tab, i) => (
        <button
          key={tab}
          className={
            i === 0
              ? 'border-r-2 border-[#383838] bg-[#535353] px-[18px] text-[#f0f0f0]'
              : 'border-r-2 border-b-2 border-[#383838] px-4 font-semibold text-[#a8a8a8]'
          }
        >
          {tab}
        </button>
      ))}
      <div className="flex flex-1 items-center justify-end border-b-2 border-[#383838] pr-[10px]">
        <button aria-label="Menu du panneau" className="flex flex-col gap-[2px]">
          <span className="h-[2px] w-5 bg-[#b4b4b4]" />
          <span className="h-[2px] w-5 bg-[#b4b4b4]" />
          <span className="h-[2px] w-5 bg-[#b4b4b4]" />
          <span className="h-[2px] w-5 bg-[#b4b4b4]" />
        </button>
      </div>
    </div>
  )
}

function PercentField({ id, label }: { id: string; label: string }) {
  return (
    <div className="flex items-center gap-[6px]">
      <label htmlFor={id}>{label}</label>
      <div className="flex h-[38px] w-[118px] overflow-hidden rounded border-2 border-[#616161] text-[#737373]">
        <input id={id} defaultValue="100 %" className="w-[85px] border-r-2 border-[#616161] bg-transparent pl-[6px]" />
        <IconButton name="chevron" label={`${label} curseur`} box="flex-1" className="size-3" />
      </div>
    </div>
  )
}

function LayersPanel() {
  return (
    <section className="flex w-[750px] shrink-0 flex-col bg-[#535353] text-[22px] text-[#939393]">
      <ColumnHead>
        <DoubleChevron back className="ml-[10px]" />
      </ColumnHead>
      <PanelTabs tabs={['Calques', 'Tracés']} />
      <div className="flex shrink-0 items-center border-b-2 border-[#404040] pt-[18px] pb-2 pl-[7px]">
        <span className="relative flex items-center">
          <Icon name="search" className="absolute left-[18px] size-5" />
          <select aria-label="Filtrer par" className="h-[38px] w-[227px] appearance-none rounded border-2 border-[#616161] bg-[#4b4b4b] pl-10 text-[#868686]">
            <option>Type</option>
          </select>
          <Icon name="chevron" className="pointer-events-none absolute right-2 size-[13px] text-[#777]" />
        </span>
        <div className="ml-[53px] flex gap-6 text-[#a6a6a6]">
          <IconButton name="image" label="Pixels" className="size-6" />
          <IconButton name="adjust" label="Réglages" className="size-6" />
          <IconButton name="type" label="Texte" className="size-6" />
          <IconButton name="shape" label="Formes" className="size-6" />
          <IconButton name="smart" label="Objets dynamiques" className="size-6" />
        </div>
        <button aria-label="Activer le filtrage" className="ml-[52px] flex h-9 w-5 justify-center rounded-full bg-[#4b4b4b]">
          <span className="size-4 rounded-full bg-[#979797]" />
        </button>
      </div>
      <div className="flex h-[58px] shrink-0 items-center border-b-2 border-[#404040] pl-[7px]">
        <span className="relative mr-2 flex items-center">
          <select aria-label="Mode de fusion" className="h-[38px] w-[344px] appearance-none rounded border-2 border-[#616161] bg-[#4b4b4b] pl-3">
            <option>Normal</option>
          </select>
          <Icon name="chevron" className="pointer-events-none absolute right-2 size-[13px] text-[#777]" />
        </span>
        <PercentField id="opacity" label="Opacité :" />
      </div>
      <div className="flex h-[62px] shrink-0 items-start pt-[10px] pl-[11px]">
        <div className="flex h-[38px] items-center">
          <span className="w-[94px]">Verrou :</span>
          <div className="flex gap-5 text-[#a0a0a0]">
            <IconButton name="checker" label="Verrouiller la transparence" className="size-6" />
            <IconButton name="brush" label="Verrouiller les pixels" className="size-6" />
            <IconButton name="move" label="Verrouiller la position" className="size-6" />
            <IconButton name="artlock" label="Verrouiller le plan de travail" className="size-6" />
            <IconButton name="lock" label="Tout verrouiller" className="size-6" />
          </div>
        </div>
        <div className="ml-auto pr-[175px]">
          <PercentField id="fill" label="Fond :" />
        </div>
      </div>
      <div className="flex flex-1 border-b-2 border-[#404040] bg-[#4d4d4d]">
        <div className="flex-1">
          <div className="flex h-[179px] items-center border-b-2 border-[#444] bg-[#535353] text-[#e4e4e4]">
            <IconButton name="eye" label="Visibilité" box="h-full w-[61px] border-r-2 border-[#444]" className="size-[26px]" />
            <div className="flex h-full flex-1 items-center bg-[#6a6a6a] pr-8 pl-[7px]">
              <span className="h-[160px] w-[116px] border-2 border-[#303030] bg-white" />
              <span className="flex-1 pl-4">Arrière-plan</span>
              <IconButton name="lockopen" label="Calque verrouillé" className="size-6" />
            </div>
          </div>
        </div>
        <div className="w-[30px] bg-[#4a4a4a]" />
      </div>
      <div className="flex h-9 shrink-0 items-end justify-end gap-[30px] overflow-hidden pr-[55px] pb-[2px] text-[#dcdcdc]">
        <IconButton name="link" label="Lier les calques" box="text-[#8c8c8c]" className="size-6" />
        <button className="w-6 font-['Liberation_Serif',serif] text-[26px] leading-6 text-[#8c8c8c] italic">fx</button>
        <IconButton name="mask" label="Ajouter un masque" className="size-6" />
        <IconButton name="adjust" label="Calque de réglage" className="size-6" />
        <IconButton name="folder" label="Nouveau groupe" className="size-6" />
        <IconButton name="plus" label="Nouveau calque" className="size-6" />
        <IconButton name="trash" label="Supprimer" box="text-[#8c8c8c]" className="size-6" />
      </div>
    </section>
  )
}

type Dock = { name: string; label: string }[][]

function IconColumn({ groups, back = false, headClass }: { groups: Dock; back?: boolean; headClass: string }) {
  return (
    <aside className="flex w-[74px] shrink-0 flex-col bg-[#535353] text-[#dcdcdc]">
      <ColumnHead>
        <DoubleChevron back={back} className={headClass} />
      </ColumnHead>
      {groups.map((group) => (
        <div key={group[0].name} className="border-b-2 border-[#383838] pt-[6px] pb-[7px]">
          <Grip />
          <div className="flex flex-col items-center pt-[3px]">
            {group.map((item) => (
              <IconButton key={item.name} name={item.name} label={item.label} box="h-[56px] w-full" className="size-[30px]" />
            ))}
          </div>
        </div>
      ))}
    </aside>
  )
}

const unit = 57.15

function HorizontalRuler() {
  const ticks = Array.from({ length: 130 }, (_, i) => i - 11)
  return (
    <div className="flex h-10 shrink-0 bg-[#464646]">
      <div className="relative w-10 shrink-0 bg-[#505050]">
        <span className="absolute top-0 left-7 h-full border-l-2 border-dotted border-[#5f5f5f]" />
        <span className="absolute top-7 left-0 w-full border-t-2 border-dotted border-[#5f5f5f]" />
      </div>
      <svg className="h-10 min-w-0 flex-1" aria-label="Règle horizontale">
        {ticks.map((t) => {
          const x = Math.round(127 + (t * unit) / 5)
          const h = t % 10 === 0 ? 40 : t % 5 === 0 ? 9 : 4
          return <rect key={t} x={x} y={40 - h} width="1" height={h} fill="#6c6c6c" />
        })}
        {Array.from({ length: 13 }, (_, i) => i * 2 - 2).map((n) => (
          <text key={n} x={Math.round(130 + n * unit)} y="30" fontSize="20" fill="#9c9c9c" fontFamily="Open Sans, sans-serif">
            {Math.abs(n)}
          </text>
        ))}
        <rect x="782" y="3" width="2" height="22" fill="#d8d8d8" />
      </svg>
    </div>
  )
}

function VerticalRuler({ max }: { max: number }) {
  const ticks = Array.from({ length: max * 5 + 5 }, (_, i) => i - 4)
  return (
    <svg className="h-full w-10 shrink-0 bg-[#464646]" aria-label="Règle verticale">
      {ticks.map((t) => {
        const y = Math.round(52 + (t * unit) / 5)
        const w = t % 10 === 0 ? 40 : t % 5 === 0 ? 9 : 4
        return <rect key={t} x={40 - w} y={y} width={w} height="1" fill="#6c6c6c" />
      })}
      {Array.from({ length: max / 2 }, (_, i) => i * 2).map((n) =>
        String(n)
          .split('')
          .map((digit, i) => (
            <text
              key={`${n}-${i}`}
              x="20"
              y={Math.round(71 + n * unit + i * 20)}
              textAnchor="middle"
              fontSize="20"
              fill="#9c9c9c"
              fontFamily="Open Sans, sans-serif"
            >
              {digit}
            </text>
          )),
      )}
    </svg>
  )
}

function DocumentArea() {
  return (
    <main className="flex min-w-0 flex-1 flex-col bg-[#424242]">
      <div className="flex h-[58px] shrink-0 border-b-2 border-[#383838] font-['Open_Sans',sans-serif] text-[23px] font-bold whitespace-nowrap">
        <button className="flex w-[400px] items-center gap-[18px] border-r-2 border-[#383838] bg-[#535353] pl-[15px] text-[#f0f0f0]">
          <Icon name="close" className="size-[14px]" />
          Sans titre-1 @ 48,4% (RVB/8)
        </button>
        <button className="flex w-[380px] items-center gap-[18px] border-r-2 border-[#383838] pl-[15px] text-[#a8a8a8]">
          <Icon name="close" className="size-[14px]" />
          Sans titre-1 @ 50% (RVB/8)
        </button>
      </div>
      <div className="flex min-h-0 flex-1">
        <div className="flex min-w-0 flex-1 flex-col bg-[#282828]">
          <HorizontalRuler />
          <div className="flex min-h-0 flex-1">
            <VerticalRuler max={24} />
            <div className="mx-[127px] mt-[52px] flex-1 bg-white" />
          </div>
          <HorizontalRuler />
          <div className="flex h-[362px] shrink-0">
            <VerticalRuler max={6} />
            <div className="mx-[127px] mb-[53px] flex-1 bg-white" />
          </div>
          <div className="flex h-5 shrink-0 items-start overflow-hidden bg-[#484848] text-[22px] leading-8 whitespace-nowrap text-[#dcdcdc]">
            <span className="h-5 w-[119px] border-r-2 border-[#404040] bg-[#424242] pl-4">48,37 %</span>
            <span className="flex h-5 w-[367px] justify-between border-r-2 border-[#404040] bg-[#4f4f4f] pr-3 pl-[50px]">
              Doc : 24,9 Mo/0 octets
              <svg viewBox="0 0 10 28" className="mt-2 h-7 w-[10px]" aria-hidden="true">
                <path d="M1 0l7 14-7 14" fill="none" stroke="currentColor" strokeWidth="2" />
              </svg>
            </span>
            <span className="mt-[6px] ml-[228px] h-8 w-[700px] rounded-full bg-[#5f5f5f]" />
          </div>
        </div>
        <div className="w-8 shrink-0 bg-[#4a4a4a] pt-[471px] pl-[6px]">
          <div className="h-[674px] w-5 rounded-full bg-[#6a6a6a]" />
        </div>
      </div>
    </main>
  )
}

const channels = [
  { name: 'RVB', key: '⌘2' },
  { name: 'Rouge', key: '⌘3' },
  { name: 'Vert', key: '⌘4' },
  { name: 'Bleu', key: '⌘5' },
]

function ChannelsAndHistory() {
  return (
    <section className="flex w-[570px] shrink-0 flex-col bg-[#535353] text-[22px] text-[#ececec]">
      <ColumnHead>
        <DoubleChevron className="mr-3 ml-auto" />
      </ColumnHead>
      <PanelTabs tabs={['Couches']} />
      <div className="mt-[10px] flex h-[834px] shrink-0 bg-[#4d4d4d]">
        <ul className="flex-1">
          {channels.map((channel) => (
            <li key={channel.name} className="flex h-[74px] items-center border-b-2 border-[#484848] bg-[#6a6a6a] pr-[14px] pl-[11px]">
              <IconButton name="eye" label={`Visibilité ${channel.name}`} className="size-6" />
              <span className="ml-[15px] h-16 w-12 border-2 border-[#303030] bg-white" />
              <span className="flex-1 pb-[2px] pl-2">{channel.name}</span>
              <span className="pb-[2px]">{channel.key}</span>
            </li>
          ))}
        </ul>
        <div className="w-8 bg-[#4a4a4a]" />
      </div>
      <div className="flex h-[52px] shrink-0 items-center justify-end gap-9 border-y-2 border-[#3c3c3c] pr-[57px]">
        <IconButton name="selection" label="Récupérer comme sélection" className="size-6" />
        <IconButton name="mask" label="Enregistrer la sélection" box="text-[#a0a0a0]" className="size-6" />
        <IconButton name="plus" label="Nouvelle couche" className="size-6" />
        <IconButton name="trash" label="Supprimer la couche" box="text-[#8c8c8c]" className="size-6" />
      </div>
      <div className="h-1 shrink-0 border-b-2 border-[#383838]" />
      <PanelTabs tabs={['Historique']} />
      <div className="mt-3 flex flex-1 border-b-2 border-[#404040] bg-[#4d4d4d]">
        <div className="flex-1">
          <div className="flex h-[76px] items-center border-b-2 border-[#727272] bg-[#535353] pb-1 pl-[9px] text-[#cfcfcf]">
            <Icon name="history" className="size-7" />
            <span className="ml-[13px] size-12 border-2 border-[#303030] bg-white" />
            <span className="pb-[2px] pl-2">Sans titre-1</span>
          </div>
          <div className="mt-1 flex h-11 items-center bg-[#6a6a6a] pl-[11px]">
            <input type="checkbox" aria-label="Source de la forme d’historique" className="size-6 appearance-none border-2 border-[#5a5a5a]" />
            <Icon name="document" className="ml-7 size-7" />
            <span className="pb-[2px] pl-6">Nouveau</span>
          </div>
        </div>
        <div className="w-8 bg-[#4a4a4a]" />
      </div>
      <div className="h-9 shrink-0" />
    </section>
  )
}

function RightPanel() {
  return (
    <aside className="flex w-[138px] shrink-0 flex-col overflow-hidden bg-[#535353] font-['Open_Sans',sans-serif] text-[21px] font-bold whitespace-nowrap text-[#f0f0f0]">
      <ColumnHead />
      <button className="relative h-[82px] border-b-2 border-[#383838] text-left">
        <span className="absolute top-[6px] left-[82px]">
          <Grip />
        </span>
        <span className="flex items-center pt-4 pl-5">
          <svg viewBox="0 0 34 36" className="h-9 w-[34px] shrink-0">
            <path d="M4 0h28v26h-8V14H4z" fill="#858585" />
            <text x="0" y="30" fontSize="30" fontStyle="italic" fontFamily="Liberation Serif, serif" fill="#dcdcdc">
              fx
            </text>
          </svg>
          <span className="pl-[19px]">Styles</span>
        </span>
      </button>
      <button className="relative h-[82px] border-b-2 border-[#383838] text-left">
        <span className="absolute top-[6px] left-[82px]">
          <Grip />
        </span>
        <span className="flex items-center pt-4 pl-[27px]">
          <Icon name="plugin" className="size-[22px]" />
          <span className="pl-6">Plug-ins</span>
        </span>
      </button>
    </aside>
  )
}

function DesktopDock() {
  return (
    <div className="absolute bottom-0 left-[2075px] flex items-end">
      <svg viewBox="0 0 114 54" className="h-[54px] w-[114px]" aria-label="Applications">
        <path d="M8 14l12 4v30H0zM106 14l-12 4v30h20z" fill="#a5713c" />
        <path d="M20 9l32 6v36H10l2-24z" fill="#f2f2f2" />
        <rect x="60" y="10" width="48" height="40" rx="7" transform="rotate(12 82 30)" fill="#1a1a1a" />
        <path d="M104 30l9 4-4 14h-8z" fill="#efefef" />
        <path d="M8 42l64-20 4 12-50 16z" fill="#c98a4b" />
        <path d="M24 18h9l-2 32h-9z" fill="#f2c718" />
        <path d="M26 11h8v8h-9z" fill="#d8433a" />
        <path d="M26 0l36 36-6 4z" fill="#b8240f" />
        <path d="M56 36l6-2 13 15-6 2z" fill="#e3b3a0" />
        <path d="M88 38v-9l8-2v9" fill="none" stroke="#fff" strokeWidth="2" />
        <circle cx="87" cy="38" r="2.500" fill="#fff" />
        <circle cx="95" cy="36" r="2.500" fill="#fff" />
        <path d="M0 44q57 8 114 0v10H0z" fill="#e9c487" />
      </svg>
      <svg viewBox="0 0 180 106" className="ml-[43px] h-[106px] w-[180px]" aria-label="CleanMyMac">
        <defs>
          <linearGradient id="frame-blue" x1="0" y1="0" x2="0" y2="1">
            <stop offset="0" stopColor="#6fa8fd" />
            <stop offset="0.15" stopColor="#86b2fb" />
            <stop offset="0.6" stopColor="#f3ddd0" />
          </linearGradient>
          <linearGradient id="pink" x1="0" y1="0" x2="0" y2="1">
            <stop offset="0" stopColor="#fa85c8" />
            <stop offset="1" stopColor="#ee4a8e" />
          </linearGradient>
        </defs>
        <rect width="180" height="180" rx="42" fill="url(#frame-blue)" />
        <rect x="9" y="9" width="162" height="170" rx="34" fill="#f6f5fd" />
        <path d="M36 34h108q12 0 13 12l8 60H16l8-60q1-12 12-12z" fill="url(#pink)" />
        <path d="M90 34l22 16 28 22M132 42l6 30 11 34" fill="none" stroke="#4f2350" strokeWidth="4" strokeLinecap="round" />
      </svg>
      <svg viewBox="0 0 206 135" className="ml-[53px] h-[135px] w-[206px]" aria-label="Capture d’écran">
        <rect width="206" height="220" rx="48" fill="#e6e6e6" />
        <rect x="12" y="12" width="182" height="200" rx="40" fill="#f5f5f5" />
        <g fill="none" strokeWidth="13" strokeLinecap="round">
          <path d="M31 69V54q0-23 23-23h15M137 31h15q23 0 23 23v15" stroke="#2a2a2a" />
          <path d="M31 70V56q0-23 23-23h15M137 33h15q23 0 23 23v14" stroke="#686868" strokeWidth="11" />
          <path d="M31 138v10M175 138v10" stroke="#4a4a4a" />
        </g>
        <path d="M68 78h12q3 0 5-4 3-6 8-6h22q5 0 8 6 2 4 5 4h12q8 0 8 8v41q0 8-8 8H68q-8 0-8-8V86q0-8 8-8z" fill="#4c4c4c" stroke="#2d2d2d" strokeWidth="1" />
        <circle cx="104" cy="105" r="17" fill="#4c4c4c" stroke="#f5f5f5" strokeWidth="6" />
      </svg>
      <svg viewBox="0 0 205 97" className="ml-[162px] h-[97px] w-[205px]" aria-label="Utilitaire de disque">
        <rect width="172" height="180" rx="42" fill="#bfcdd2" />
        <rect x="5" y="4" width="162" height="180" rx="38" fill="#707a80" />
        <rect x="6" y="6" width="160" height="180" rx="37" fill="#f6f9fb" />
        <g fill="none" strokeLinecap="round">
          <path d="M66 26C48 26 44 38 46 56q2 22 10 40M104 25c16 0 20 12 18 28-2 16-8 28-10 40" stroke="#8a8a8a" strokeWidth="4" />
          <path d="M66 26C48 26 44 38 46 56q2 22 10 40M104 25c16 0 20 12 18 28-2 16-8 28-10 40" stroke="#f3f3f3" strokeWidth="1.500" />
        </g>
        <path d="M66 23l8-1 2 4-1 6-9-1zM93 21l8 0 3 4-2 5-9 1z" fill="#1b1b1b" />
        <path d="M98 97V90q0-5 5-5h71q5 0 5 5v7z" fill="#8b9194" />
        <path d="M113 90h56v7h-56z" fill="#262626" />
        <path d="M120 92c4-16 26-18 32-5" fill="none" stroke="#333" strokeWidth="6" />
        <path d="M180 76q0-2 2-2h6l2-4h7l2 4h4q2 0 2 2v16q0 2-2 2h-21q-2 0-2-2z" fill="#d0d0d0" />
        <circle cx="193" cy="85" r="5.500" fill="#d0d0d0" stroke="#555" strokeWidth="2.500" />
      </svg>
      <svg viewBox="0 0 106 27" className="ml-[6px] h-[27px] w-[106px]" aria-label="Moniteur d’activité">
        <rect width="106" height="90" rx="26" fill="#cfdfea" />
        <rect x="3" y="4" width="100" height="90" rx="23" fill="#050505" />
        <rect x="12" y="12" width="82" height="60" rx="8" fill="#1d2b29" />
        <path d="M44 12v15M60 12v15M76 12v15" fill="none" stroke="#3c5a50" strokeWidth="1.500" />
        <path d="M29 27l2-12 2 12" fill="none" stroke="#9be8cd" strokeWidth="2" />
      </svg>
      <div className="absolute bottom-[174px] left-[363px] flex w-[260px] flex-col items-center">
        <span className="flex h-[52px] w-full items-center justify-center rounded-lg bg-[#aea8ae] text-[27px] whitespace-nowrap text-[#111]">
          Capture d’écran
        </span>
        <svg viewBox="0 0 30 16" className="h-4 w-[30px]" aria-hidden="true">
          <path d="M0 0h30L15 16z" fill="#aea8ae" />
        </svg>
      </div>
    </div>
  )
}

export default function App() {
  return (
    <div className="relative flex h-screen w-full flex-col overflow-hidden bg-[#535353] font-['Inter',sans-serif]">
      <div className="h-2 shrink-0 bg-[#8dc12b]" />
      <MenuBar />
      <TitleBar />
      <OptionsBar />
      <div className="flex min-h-0 flex-1">
        <Toolbar />
        <Divider />
        <LayersPanel />
        <Divider />
        <IconColumn
          headClass="ml-[10px]"
          groups={[
            [
              { name: 'sliders', label: 'Propriétés' },
              { name: 'book', label: 'Bibliothèques' },
              { name: 'play', label: 'Scripts' },
            ],
          ]}
        />
        <Divider />
        <IconColumn
          headClass="ml-[10px]"
          groups={[
            [{ name: 'info', label: 'Informations' }],
            [{ name: 'adjust', label: 'Réglages' }],
            [
              { name: 'swatches', label: 'Nuancier' },
              { name: 'gradient', label: 'Dégradés' },
              { name: 'palette', label: 'Couleur' },
              { name: 'pattern', label: 'Motifs' },
            ],
          ]}
        />
        <Divider />
        <DocumentArea />
        <Divider />
        <ChannelsAndHistory />
        <Divider />
        <IconColumn
          back
          headClass="ml-12"
          groups={[
            [{ name: 'brushes', label: 'Paramètres de forme' }],
            [
              { name: 'parastyle', label: 'Styles de paragraphe' },
              { name: 'charstyle', label: 'Styles de caractère' },
            ],
            [{ name: 'glyphs', label: 'Glyphes' }],
          ]}
        />
        <Divider />
        <RightPanel />
      </div>
      <ShareBanner />
      <DesktopDock />
    </div>
  )
}
